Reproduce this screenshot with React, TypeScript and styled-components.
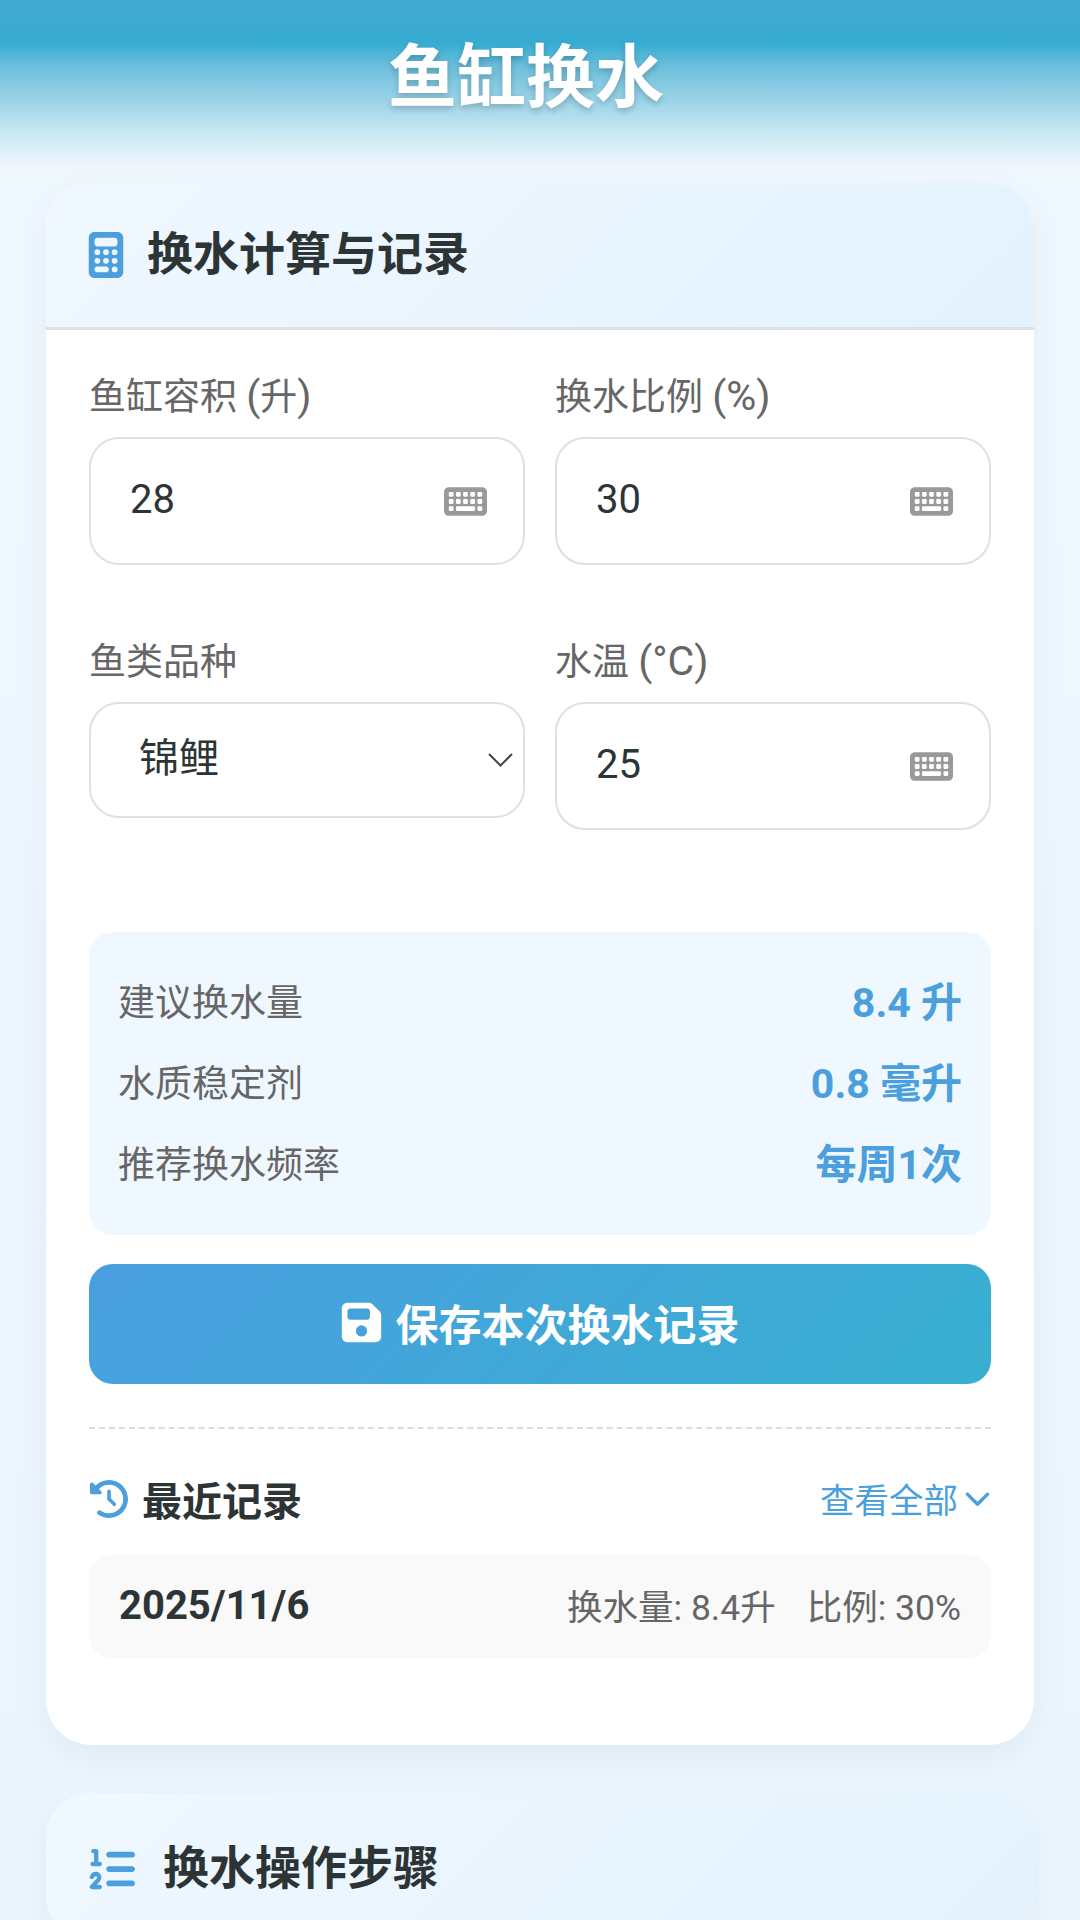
import { FaCalculator, FaChevronDown, FaClockRotateLeft, FaFloppyDisk, FaKeyboard, FaListOl } from "react-icons/fa6";
import styled, { createGlobalStyle } from "styled-components";

const GlobalStyle = createGlobalStyle`
  html, body {
    margin: 0;
    padding: 0;
    height: 1920px;
    overflow: hidden;
    background: #f0f8ff;
  }
  * {
    box-sizing: border-box;
  }
`;

const Page = styled.div`
  width: 1080px;
  height: 1920px;
  overflow: hidden;
  font-family: Roboto, "Noto Sans CJK SC", sans-serif;
  color: #333;
  background: linear-gradient(180deg, #f0f8ff 0%, #ebf5fe 100%);
`;

const TopBar = styled.header`
  height: 183px;
  padding: 34px 28px 0 0;
  text-align: center;
  background: linear-gradient(
    180deg,
    #42a9d3 0px,
    #36acd2 43px,
    #6dbfdc 67px,
    #9ad3e8 100px,
    #c8e8f3 133px,
    #eff7fd 167px,
    #f0f8ff 183px
  );
`;

const Title = styled.h1`
  margin: 0;
  font-size: 69px;
  line-height: 90px;
  font-weight: 700;
  color: #fff;
  text-shadow: 0 3px 6px rgba(0, 0, 0, 0.2);
`;

const Card = styled.section`
  margin: 0 46px 48px;
  background: #fff;
  border-radius: 45px;
  overflow: hidden;
  box-shadow: 0 12px 36px rgba(0, 0, 0, 0.05);
`;

const CardHead = styled.div<{ $gap: number; $top: number; $left: number }>`
  display: flex;
  align-items: center;
  gap: ${(p) => p.$gap}px;
  height: 147px;
  padding: ${(p) => p.$top}px 0 0 ${(p) => p.$left}px;
  background: linear-gradient(135deg, #f0f8ff, #e3f2fd);
  border-bottom: 3px solid #e0e0e0;
  svg {
    color: #4a9fdc;
    font-size: 46px;
  }
`;

const CardTitle = styled.h2`
  margin: 0 0 10px;
  font-size: 46px;
  font-weight: 700;
  color: #2d3436;
`;

const CardBody = styled.div`
  padding: 45px 43px 86px;
`;

const FormGrid = styled.div`
  display: grid;
  grid-template-columns: 436px 436px;
  column-gap: 30px;
`;

const Field = styled.div<{ $after: number }>`
  margin-bottom: ${(p) => p.$after}px;
`;

const FieldLabel = styled.div`
  height: 48px;
  font-size: 37px;
  line-height: 46px;
  color: #666;
  margin-bottom: 14px;
`;

const LabelUnit = styled.span`
  font-size: 41px;
  line-height: 1;
`;

const InputBox = styled.div`
  display: flex;
  align-items: center;
  justify-content: space-between;
  height: 128px;
  padding: 0 36px 0 39px;
  border: 2px solid #e0e0e0;
  border-radius: 30px;
  font-size: 40px;
  color: #2d3436;
  background: #fff;
  svg {
    color: #999;
    font-size: 43px;
  }
`;

const SelectBox = styled(InputBox)`
  height: 116px;
  padding: 0 10px 0 48px;
`;

const BoxValue = styled.span<{ $lift: number }>`
  margin-bottom: ${(p) => p.$lift}px;
`;

const SelectArrow = () => (
  <svg width="25" height="14" viewBox="0 0 25 14" fill="none" stroke="#444" strokeWidth="2">
    <path d="M1 1l11.5 11.5L24 1" />
  </svg>
);

const ResultPanel = styled.div`
  display: flex;
  flex-direction: column;
  gap: 29px;
  height: 303px;
  padding: 42px 29px 0;
  border-radius: 24px;
  background: #f0f8ff;
`;

const ResultRow = styled.div`
  display: flex;
  justify-content: space-between;
  align-items: center;
  height: 52px;
`;

const ResultName = styled.span`
  font-size: 37px;
  color: #666;
`;

const ResultValue = styled.span`
  margin-bottom: 3px;
  font-size: 41px;
  font-weight: 700;
  color: #4a9fdc;
`;

const SaveButton = styled.button`
  display: flex;
  align-items: center;
  justify-content: center;
  gap: 12px;
  width: 100%;
  height: 120px;
  margin-top: 29px;
  padding: 0 2px 4px 0;
  border: 0;
  border-radius: 24px;
  font-family: inherit;
  font-size: 43px;
  font-weight: 700;
  color: #fff;
  background: linear-gradient(135deg, #4a9fdf, #38afd1);
  svg {
    font-size: 45px;
  }
`;

const Divider = styled.div`
  margin-top: 43px;
  border-top: 2px dashed #dcdcdc;
`;

const HistoryHead = styled.div`
  display: flex;
  justify-content: space-between;
  align-items: center;
  height: 60px;
  margin-top: 40px;
`;

const HistoryTitle = styled.div`
  display: flex;
  align-items: center;
  gap: 14px;
  margin-left: 1px;
  font-size: 40px;
  font-weight: 700;
  color: #2d3436;
  svg {
    color: #4a9fdc;
    font-size: 38px;
  }
`;

const ViewAll = styled.div`
  display: flex;
  align-items: center;
  gap: 6px;
  padding-bottom: 3px;
  font-size: 34.5px;
  color: #4a9fdc;
  svg {
    font-size: 27px;
  }
`;

const RecordRow = styled.div`
  display: flex;
  justify-content: space-between;
  align-items: center;
  height: 104px;
  margin-top: 26px;
  padding: 0 30px;
  border-radius: 24px;
  background: #f9f9f9;
`;

const RecordDate = styled.span`
  margin-bottom: 3px;
  font-size: 40px;
  font-weight: 700;
  color: #2d3436;
`;

const RecordStats = styled.div`
  display: flex;
  gap: 31px;
  margin-bottom: 5px;
  font-size: 35.5px;
  color: #666;
`;

export default function App() {
  return (
    <Page>
      <GlobalStyle />
      <TopBar>
        <Title>鱼缸换水</Title>
      </TopBar>

      <Card>
        <CardHead $gap={18} $top={0} $left={37}>
          <FaCalculator />
          <CardTitle>换水计算与记录</CardTitle>
        </CardHead>
        <CardBody>
          <FormGrid>
            <Field $after={75}>
              <FieldLabel>
                鱼缸容积 <LabelUnit>(</LabelUnit>升<LabelUnit>)</LabelUnit>
              </FieldLabel>
              <InputBox>
                <BoxValue $lift={3}>28</BoxValue>
                <FaKeyboard />
              </InputBox>
            </Field>
            <Field $after={75}>
              <FieldLabel>
                换水比例 <LabelUnit>(%)</LabelUnit>
              </FieldLabel>
              <InputBox>
                <BoxValue $lift={3}>30</BoxValue>
                <FaKeyboard />
              </InputBox>
            </Field>
            <Field $after={102}>
              <FieldLabel>鱼类品种</FieldLabel>
              <SelectBox>
                <BoxValue $lift={10}>锦鲤</BoxValue>
                <SelectArrow />
              </SelectBox>
            </Field>
            <Field $after={102}>
              <FieldLabel>
                水温 <LabelUnit>(°C)</LabelUnit>
              </FieldLabel>
              <InputBox>
                <BoxValue $lift={3}>25</BoxValue>
                <FaKeyboard />
              </InputBox>
            </Field>
          </FormGrid>

          <ResultPanel>
            <ResultRow>
              <ResultName>建议换水量</ResultName>
              <ResultValue>8.4 升</ResultValue>
            </ResultRow>
            <ResultRow>
              <ResultName>水质稳定剂</ResultName>
              <ResultValue>0.8 毫升</ResultValue>
            </ResultRow>
            <ResultRow>
              <ResultName>推荐换水频率</ResultName>
              <ResultValue>每周1次</ResultValue>
            </ResultRow>
          </ResultPanel>

          <SaveButton>
            <FaFloppyDisk />
            保存本次换水记录
          </SaveButton>

          <Divider />

          <HistoryHead>
            <HistoryTitle>
              <FaClockRotateLeft />
              最近记录
            </HistoryTitle>
            <ViewAll>
              查看全部
              <FaChevronDown />
            </ViewAll>
          </HistoryHead>

          <RecordRow>
            <RecordDate>2025/11/6</RecordDate>
            <RecordStats>
              <span>换水量: 8.4升</span>
              <span>比例: 30%</span>
            </RecordStats>
          </RecordRow>
        </CardBody>
      </Card>

      <Card>
        <CardHead $gap={28} $top={8} $left={43}>
          <FaListOl />
          <CardTitle>换水操作步骤</CardTitle>
        </CardHead>
      </Card>
    </Page>
  );
}
